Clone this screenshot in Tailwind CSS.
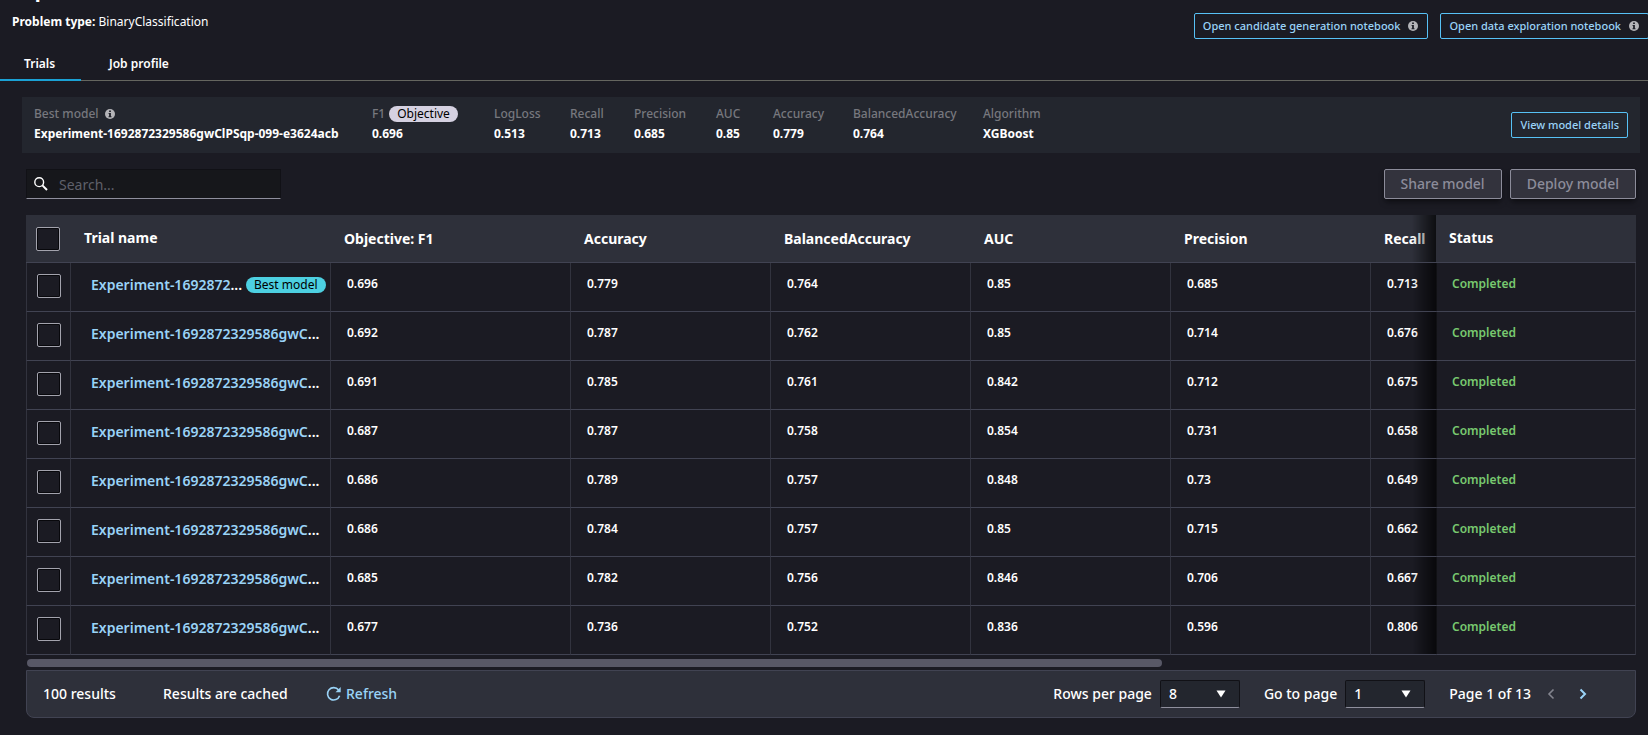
<!DOCTYPE html>
<html lang="en">
<head>
    <meta charset="UTF-8">
    <meta name="viewport" content="width=device-width, initial-scale=1.0">
    <title>Experiment trials</title>
    <script src="https://cdn.jsdelivr.net/npm/@tailwindcss/browser@4"></script>
    <style>
        body {
            font-family: 'Noto Sans', 'Open Sans', sans-serif;
        }
    </style>
</head>
<body class="bg-[#1b1b23] text-white min-h-screen overflow-x-hidden">
    <!-- shared icons -->
    <svg class="hidden">
        <symbol id="info" viewBox="0 0 10 10">
            <circle cx="5" cy="5" r="5" fill="#b4b4b8"></circle>
            <path d="M4.1 1.5h1.8v1.4H4.1zM3.6 3.9h2.3v3.3h.6v1H3.5v-1h.6V4.9h-.5z" fill="#1f2028"></path>
        </symbol>
        <symbol id="caret" viewBox="0 0 10 8">
            <path d="M0.5 0.5h9L5 7.5z" fill="currentColor"></path>
        </symbol>
    </svg>

    <header class="flex justify-between items-start pl-3 h-11">
        <div>
            <h1 class="-mt-6 text-xl leading-7 font-bold">Experiment</h1>
            <p class="mt-2 text-xs leading-5"><b>Problem type:</b> BinaryClassification</p>
        </div>
        <div class="flex gap-3 pt-3 -mr-px mt-px">
            <button class="flex items-center gap-2 h-[26px] px-2 border border-[#57c1f5] rounded-xs text-[11px] font-medium text-[#9ad3f7] whitespace-nowrap">
                Open candidate generation notebook
                <svg class="w-[10px] h-[10px] mr-px"><use href="#info"></use></svg>
            </button>
            <button class="flex items-center gap-2 h-[26px] px-2 border border-[#57c1f5] rounded-xs text-[11px] font-medium text-[#9ad3f7] whitespace-nowrap">
                Open data exploration notebook
                <svg class="w-[10px] h-[10px] mr-px"><use href="#info"></use></svg>
            </button>
        </div>
    </header>

    <nav class="flex h-[37px] border-b border-[#65665f] text-xs font-semibold">
        <a href="#trials" class="flex items-center w-[81px] pl-6 -mb-px pt-1 border-b-2 border-[#1ba1d4]">Trials</a>
        <a href="#profile" class="flex items-center pl-7 pt-1">Job profile</a>
    </nav>

    <main class="pt-4">
        <section class="flex items-center justify-between ml-[22px] mr-2 px-3 py-[7px] bg-[#23262e]">
            <dl class="grid grid-cols-[338px_122px_76px_64px_82px_57px_80px_130px_auto] pb-[2px] text-xs leading-5 [&_dt]:font-medium [&_dt]:text-[#77787e] [&_dd]:font-bold whitespace-nowrap">
                <div>
                    <dt class="flex items-center gap-[6px]">Best model <svg class="w-[10px] h-[10px]"><use href="#info"></use></svg></dt>
                    <dd>Experiment-1692872329586gwClPSqp-099-e3624acb</dd>
                </div>
                <div>
                    <dt class="flex items-center gap-1">F1 <span class="h-4 px-2 rounded-full bg-[#d5d1e1] font-normal text-black leading-4">Objective</span></dt>
                    <dd>0.696</dd>
                </div>
                <div><dt>LogLoss</dt><dd>0.513</dd></div>
                <div><dt>Recall</dt><dd>0.713</dd></div>
                <div><dt>Precision</dt><dd>0.685</dd></div>
                <div><dt>AUC</dt><dd>0.85</dd></div>
                <div><dt>Accuracy</dt><dd>0.779</dd></div>
                <div><dt>BalancedAccuracy</dt><dd>0.764</dd></div>
                <div><dt>Algorithm</dt><dd>XGBoost</dd></div>
            </dl>
            <button class="h-[26px] px-2 border border-[#57c1f5] rounded-xs text-[11px] font-medium text-[#9ad3f7] whitespace-nowrap">View model details</button>
        </section>

        <section class="flex justify-between items-center mt-4 ml-[26px] mr-3">
            <div class="relative">
                <svg viewBox="0 0 14 14" class="absolute left-2 top-2 w-[14px] h-[14px]" fill="none" stroke="white">
                    <circle cx="5.2" cy="5.2" r="4.4" stroke-width="1.4"></circle>
                    <path d="M8.4 8.4l4.6 4.6" stroke-width="2"></path>
                </svg>
                <input type="text" placeholder="Search..." aria-label="Search trials"
                       class="block w-[255px] h-[30px] pl-8 pr-2 bg-[#16171b] border border-[#111116] border-b-[#8f8f9d] text-sm placeholder:text-[#5f606a] outline-none">
            </div>
            <div class="flex gap-2">
                <button disabled class="h-[30px] px-4 border border-[#8c8c9a] rounded-xs bg-[#33333d] text-sm font-medium text-[#8c8c9a] shadow-md shadow-black/40">Share model</button>
                <button disabled class="h-[30px] px-4 border border-[#8c8c9a] rounded-xs bg-[#33333d] text-sm font-medium text-[#8c8c9a] shadow-md shadow-black/40">Deploy model</button>
            </div>
        </section>

        <section class="mt-4 ml-[26px] mr-3">
            <div class="overflow-x-auto [scrollbar-width:none]">
                <table class="table-fixed border-separate border-spacing-0 w-[1744px] min-w-full text-left">
                    <colgroup>
                        <col class="w-[44px]">
                        <col class="w-[260px]">
                        <col class="w-[240px]">
                        <col class="w-[200px]">
                        <col class="w-[200px]">
                        <col class="w-[200px]">
                        <col class="w-[200px]">
                        <col class="w-[200px]">
                        <col class="w-[200px]">
                    </colgroup>
                    <thead>
                        <tr class="h-12 text-sm [&>th]:border-b [&>th]:border-[#414352] [&>th]:bg-[#2e303a] [&>th]:font-bold">
                            <th class="pl-[10px]"><input type="checkbox" aria-label="Select all" class="block appearance-none size-6 rounded-xs border border-[#a3a3ad] bg-[#1b1b23] shadow-[inset_0_0_0_1px_#08080c] checked:bg-[#57c1f5]"></th>
                            <th class="pl-[14px] pb-[2px]">Trial name</th>
                            <th class="pl-[14px]">Objective: F1</th>
                            <th class="pl-[14px]">Accuracy</th>
                            <th class="pl-[14px]">BalancedAccuracy</th>
                            <th class="pl-[14px]">AUC</th>
                            <th class="pl-[14px]">Precision</th>
                            <th class="pl-[14px]">Recall</th>
                            <th class="pl-[13px] pb-[2px] sticky right-0 before:absolute before:right-full before:inset-y-0 before:w-6 before:bg-linear-to-r before:from-transparent before:to-black/70">Status</th>
                        </tr>
                    </thead>
                    <tbody id="trials"></tbody>
                </table>
            </div>

            <div class="mt-1 h-2 px-px"><div class="h-2 w-[70.6%] rounded-full bg-[#585866]"></div></div>

            <footer class="flex justify-between items-center mt-[3px] h-12 pl-4 pr-12 border border-[#414352] rounded-b-lg bg-[#2e303a] text-sm font-medium whitespace-nowrap">
                <div class="flex items-center">
                    <span class="w-[120px]">100 results</span>
                    <span class="w-[163px]">Results are cached</span>
                    <button class="flex items-center gap-1 text-[#9ad3f7]">
                        <svg viewBox="0 0 16 16" class="size-4" fill="none" stroke="currentColor" stroke-width="1.6">
                            <path d="M13.6 9.8A6.2 6.2 0 1 1 12.6 4"></path>
                            <path d="M14.7 1v5.2H9.5z" fill="currentColor" stroke="none"></path>
                        </svg>
                        Refresh
                    </button>
                </div>
                <div class="flex items-center">
                    <label for="rows" class="mr-2">Rows per page</label>
                    <div class="relative mr-6">
                        <select id="rows" class="block appearance-none w-20 h-7 pl-2 bg-[#23262e] border border-[#111116] border-b-[#8f8f9d] rounded-xs">
                            <option>8</option>
                            <option>16</option>
                        </select>
                        <svg class="absolute right-[14px] top-[10px] w-[10px] h-2 pointer-events-none"><use href="#caret"></use></svg>
                    </div>
                    <label for="page" class="mr-2">Go to page</label>
                    <div class="relative mr-6">
                        <select id="page" class="block appearance-none w-20 h-7 pl-2 bg-[#23262e] border border-[#111116] border-b-[#8f8f9d] rounded-xs">
                            <option>1</option>
                            <option>2</option>
                        </select>
                        <svg class="absolute right-[14px] top-[10px] w-[10px] h-2 pointer-events-none"><use href="#caret"></use></svg>
                    </div>
                    <span>Page 1 of 13</span>
                    <button disabled aria-label="Previous page" class="ml-4 text-[#84858f]">
                        <svg viewBox="0 0 8 12" class="w-2 h-3" fill="none" stroke="currentColor" stroke-width="1.6"><path d="M6.5 1.5L2 6l4.5 4.5"></path></svg>
                    </button>
                    <button aria-label="Next page" class="ml-6 text-[#9ad3f7]">
                        <svg viewBox="0 0 8 12" class="w-2 h-3" fill="none" stroke="currentColor" stroke-width="2"><path d="M1.5 1.5L6 6l-4.5 4.5"></path></svg>
                    </button>
                </div>
            </footer>
        </section>
    </main>

    <script>
        // objective F1, accuracy, balanced accuracy, AUC, precision, recall
        const trials = [
            ['0.696', '0.779', '0.764', '0.85', '0.685', '0.713'],
            ['0.692', '0.787', '0.762', '0.85', '0.714', '0.676'],
            ['0.691', '0.785', '0.761', '0.842', '0.712', '0.675'],
            ['0.687', '0.787', '0.758', '0.854', '0.731', '0.658'],
            ['0.686', '0.789', '0.757', '0.848', '0.73', '0.649'],
            ['0.686', '0.784', '0.757', '0.85', '0.715', '0.662'],
            ['0.685', '0.782', '0.756', '0.846', '0.706', '0.667'],
            ['0.677', '0.736', '0.752', '0.836', '0.596', '0.806']
        ];
        const badge = '<span class="shrink-0 h-4 px-2 rounded-full bg-[#4dd0e1] text-black text-xs font-normal leading-4">Best model</span>';

        document.getElementById('trials').innerHTML = trials.map((values, i) => `
            <tr class="h-[49px] text-xs font-semibold [&>td]:border-b [&>td]:border-b-[#414352] [&>td]:border-l [&>td]:border-l-[#32333e]">
                <td class="pl-[10px] pb-[2px]"><input type="checkbox" aria-label="Select trial ${i + 1}" class="block appearance-none size-6 rounded-xs border border-[#a3a3ad] bg-[#1b1b23] shadow-[inset_0_0_0_1px_#08080c] checked:bg-[#57c1f5]"></td>
                <td class="pl-5 pr-1 pb-1">
                    <div class="flex items-center gap-1">
                        <div class="whitespace-nowrap text-sm font-semibold"><a href="#" class="text-[#9ad3f7]">Experiment-1692872${i === 0 ? '' : '329586gwC'}</a>...</div>
                        ${i === 0 ? badge : ''}
                    </div>
                </td>
                ${values.map(v => `<td class="pl-4 pb-[6px]">${v}</td>`).join('')}
                <td class="pl-[15px] pb-[6px] sticky right-0 bg-[#1b1b23] text-[#78c96f] border-r border-r-[#32333e] before:absolute before:right-full before:inset-y-0 before:w-6 before:bg-linear-to-r before:from-transparent before:to-black/70">Completed</td>
            </tr>`).join('');
    </script>
</body>
</html>
